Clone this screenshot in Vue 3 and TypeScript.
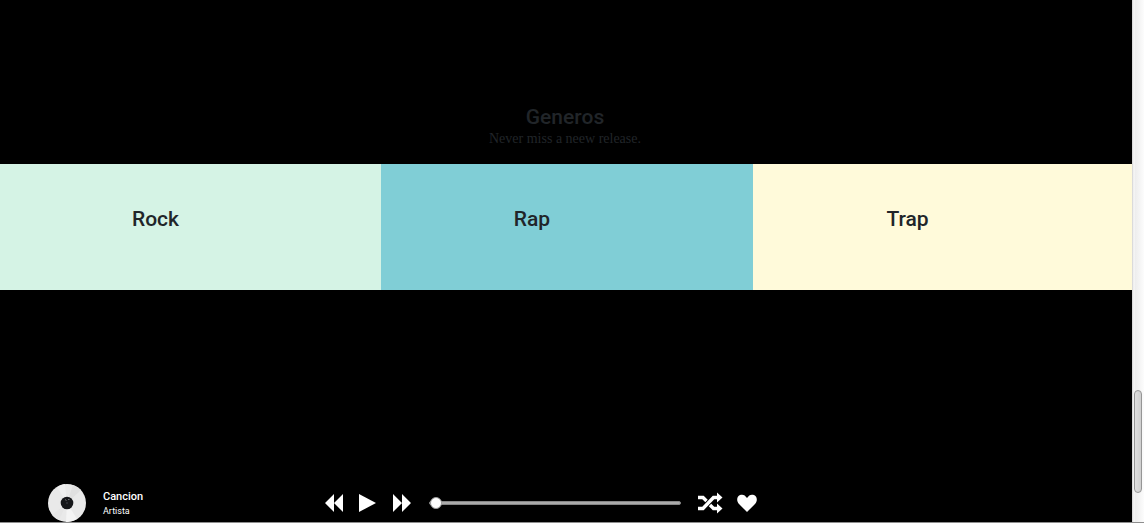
<script setup lang="ts">
import { ref } from 'vue'

interface Genre {
  name: string
  tone: string
}

const genres: Genre[] = [
  { name: 'Rock', tone: 'mint' },
  { name: 'Rap', tone: 'teal' },
  { name: 'Trap', tone: 'cream' },
]

const position = ref(0)
</script>

<template>
  <div class="window">
    <div class="page">
      <main class="content">
        <header class="intro">
          <h2 class="heading">Generos</h2>
          <p class="tagline">Never miss a neew release.</p>
        </header>
        <section class="genres">
          <article v-for="genre in genres" :key="genre.name" class="genre" :class="genre.tone">
            <h3 class="heading">{{ genre.name }}</h3>
          </article>
        </section>
      </main>

      <footer class="player">
        <div class="track">
          <svg class="disc" viewBox="0 0 38 38" aria-hidden="true">
            <circle cx="19" cy="19" r="19" fill="#e9e9e9" />
            <path d="M19 19 9 3A19 19 0 0 1 17 0Z" fill="#efefef" />
            <path d="M19 19 25 1A19 19 0 0 1 33 6Z" fill="#e0e0e0" />
            <path d="M19 19 29 35A19 19 0 0 1 18 38Z" fill="#f4f4f4" />
            <path d="M19 19 11 36A19 19 0 0 1 4 31Z" fill="#e5e5e5" />
            <circle cx="19" cy="19" r="6.3" fill="#151619" />
            <path d="M17 15.5 18.500 16.500M20 15.5h1.500" stroke="#858585" stroke-width=".8" />
            <circle cx="19" cy="19" r="1" fill="#303238" />
          </svg>
          <div>
            <p class="song">Cancion</p>
            <p class="artist">Artista</p>
          </div>
        </div>

        <div class="controls">
          <button type="button" aria-label="Anterior">
            <svg width="20" height="20" viewBox="0 0 20 20"><path d="M10 1v18L1 10ZM19 1v18L10 10Z" /></svg>
          </button>
          <button type="button" aria-label="Reproducir">
            <svg width="20" height="20" viewBox="0 0 20 20"><path d="M1 1v18l17-9Z" /></svg>
          </button>
          <button type="button" aria-label="Siguiente">
            <svg width="20" height="20" viewBox="0 0 20 20"><path d="M1 1v18l9-9ZM10 1v18l9-9Z" /></svg>
          </button>
        </div>

        <input v-model="position" class="seek" type="range" min="0" max="100" aria-label="Progreso" />

        <div class="actions">
          <button type="button" aria-label="Aleatorio">
            <svg width="26" height="22" viewBox="0 0 26 22">
              <path d="M1 5.5h5l3.5 3.5M13 13l3.5 3.5h4M1 16.5h5L16.5 5.5h4" fill="none" stroke="#fff" stroke-width="3.4" />
              <path d="M20 .5v10l5.5-5ZM20 11.5v10l5.5-5Z" />
            </svg>
          </button>
          <button type="button" aria-label="Me gusta">
            <svg width="20" height="20" viewBox="0 0 20 20">
              <path d="M10 19 2 11C-1 8 0 3 3 2c3-1 5 0 7 3 2-3 4-4 7-3 3 1 4 6 1 9Z" />
            </svg>
          </button>
        </div>
      </footer>
    </div>
    <div class="scrollbar" aria-hidden="true"><div class="thumb"></div></div>
  </div>
</template>

<style>
body {
  background: #000;
}
</style>

<style scoped>
.window {
  display: flex;
  min-height: 100vh;
  box-sizing: border-box;
  border-bottom: 1px solid #8e8e8e;
  font-family: Roboto, sans-serif;
}

.page {
  flex: 1;
  display: flex;
  flex-direction: column;
  background: #000;
}

.content {
  flex: 1;
  padding-top: 104px;
}

.intro {
  padding-right: 2px;
  padding-bottom: 17px;
  text-align: center;
  color: #212529;
}

.heading,
p {
  margin: 0;
}

.heading {
  font-size: 21px;
  font-weight: 500;
  line-height: 26px;
}

.tagline {
  font-family: "Liberation Serif", serif;
  font-size: 14px;
  line-height: 17px;
}

.genres {
  display: grid;
  grid-template-columns: 381fr 372fr 379fr;
}

.genre {
  padding: 42px 70px 58px 0;
  text-align: center;
  color: #212529;
}

.mint {
  background: #d5f3e5;
}

.teal {
  background: #80ced6;
}

.cream {
  background: #fffada;
}

.player {
  display: flex;
  align-items: center;
  height: 38px;
  padding-left: 48px;
  color: #fff;
}

.track {
  display: flex;
  align-items: center;
  gap: 17px;
  width: 276px;
}

.disc {
  width: 38px;
  height: 38px;
}

.song {
  font-size: 11px;
  font-weight: 500;
  line-height: 15px;
}

.artist {
  font-size: 9px;
  line-height: 14px;
}

button {
  display: flex;
  padding: 0;
  border: 0;
  background: none;
  cursor: pointer;
}

button svg {
  fill: #fff;
}

.controls,
.actions {
  display: flex;
  align-items: center;
  gap: 14px;
}

.seek {
  appearance: none;
  width: 252px;
  height: 12px;
  margin: 0 16px 0 17px;
  background: transparent;
}

.seek::-webkit-slider-runnable-track {
  height: 4px;
  box-sizing: border-box;
  border: 1px solid #858585;
  border-radius: 2px;
  background: #aaa;
}

.seek::-webkit-slider-thumb {
  appearance: none;
  width: 12px;
  height: 12px;
  box-sizing: border-box;
  margin-top: -5px;
  border: 1px solid #999;
  border-radius: 50%;
  background: #fff;
}

.scrollbar {
  display: flex;
  flex-direction: column;
  justify-content: flex-end;
  width: 12px;
  box-sizing: border-box;
  padding: 0 2px 29px;
  background: linear-gradient(to right, #d0d0d0, #fafafa 2px, #ededed 3px, #fcfcfc);
}

.thumb {
  height: 103px;
  box-sizing: border-box;
  border: 1px solid #969696;
  border-radius: 4px;
  background: linear-gradient(to right, #dedede, #cfcfcf);
}
</style>
